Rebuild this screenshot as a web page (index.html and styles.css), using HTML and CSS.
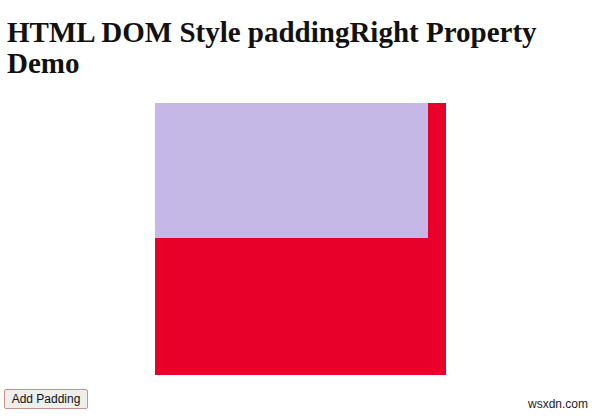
FILE: index.html
```html
<!DOCTYPE html>
<html>
<head>
<meta charset="utf-8">
<link rel="stylesheet" href="styles.css">
</head>
<body>
<h1 class="title">HTML DOM Style paddingRight Property Demo</h1>
<div class="outer">
  <div class="inner"></div>
</div>
<button class="btn">Add Padding</button>
<span class="mark">wsxdn.com</span>
</body>
</html>
```
FILE: styles.css
```css
html, body {
  margin: 0;
  padding: 0;
  background: #fff;
}
body {
  position: relative;
  width: 600px;
  height: 418px;
  overflow: hidden;
  font-family: "Liberation Serif", "Times New Roman", serif;
}
.title {
  margin: 0;
  padding: 17px 0 0 7px;
  font-size: 29px;
  line-height: 31px;
  font-weight: bold;
  color: #111;
  width: 560px;
}
.outer {
  margin: 24px auto 0;
  width: 291px;
  height: 272px;
  background: #e8002a;
}
.inner {
  width: 273px;
  height: 135px;
  background: #c5b8e6;
}
.btn {
  display: block;
  margin: 14px 0 0 4px;
  width: 84px;
  height: 20px;
  padding: 0;
  font-family: "Liberation Sans", Arial, sans-serif;
  font-size: 12px;
  color: #111;
  background: #eeeeee;
  border: 1px solid #c8948a;
  border-radius: 2px;
}
.mark {
  position: absolute;
  right: 12px;
  bottom: 7px;
  font-family: "Liberation Sans", Arial, sans-serif;
  font-size: 12px;
  color: #222;
}
```
